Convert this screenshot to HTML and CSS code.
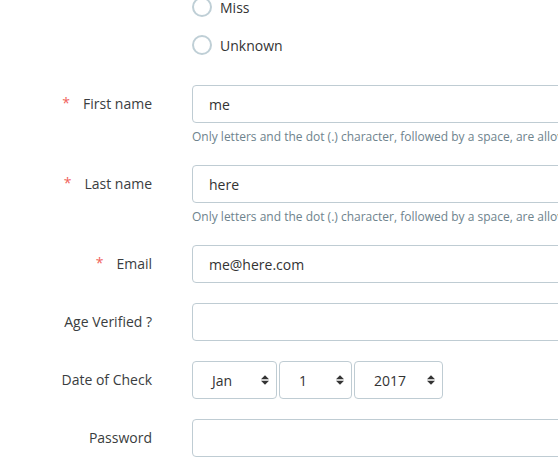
FILE: index.html
```html
<!DOCTYPE html>
<html lang="en">
<head>
<meta charset="utf-8">
<title>Form</title>
<link rel="stylesheet" href="styles.css">
</head>
<body>
<form class="form">
  <div class="radio-list">
    <label class="radio-row"><span class="radio"></span><span>Miss</span></label>
    <label class="radio-row"><span class="radio"></span><span>Unknown</span></label>
  </div>

  <div class="field">
    <div class="label"><span class="req">*</span>First name</div>
    <div class="control">
      <div class="input">me</div>
      <div class="help">Only letters and the dot (.) character, followed by a space, are allowed.</div>
    </div>
  </div>

  <div class="field">
    <div class="label"><span class="req">*</span>Last name</div>
    <div class="control">
      <div class="input">here</div>
      <div class="help">Only letters and the dot (.) character, followed by a space, are allowed.</div>
    </div>
  </div>

  <div class="field">
    <div class="label"><span class="req">*</span>Email</div>
    <div class="control">
      <div class="input">me@here.com</div>
    </div>
  </div>

  <div class="field">
    <div class="label">Age Verified ?</div>
    <div class="control">
      <div class="input"></div>
    </div>
  </div>

  <div class="field">
    <div class="label">Date of Check</div>
    <div class="control">
      <div class="selects">
        <div class="select sel-month"><span>Jan</span><svg class="caret" width="8" height="10" viewBox="0 0 8 10"><path d="M0 4.2 L4 0.2 L8 4.2 Z M0 5.8 L8 5.8 L4 9.8 Z" fill="#333"/></svg></div>
        <div class="select sel-day"><span>1</span><svg class="caret" width="8" height="10" viewBox="0 0 8 10"><path d="M0 4.2 L4 0.2 L8 4.2 Z M0 5.8 L8 5.8 L4 9.8 Z" fill="#333"/></svg></div>
        <div class="select sel-year"><span>2017</span><svg class="caret" width="8" height="10" viewBox="0 0 8 10"><path d="M0 4.2 L4 0.2 L8 4.2 Z M0 5.8 L8 5.8 L4 9.8 Z" fill="#333"/></svg></div>
      </div>
    </div>
  </div>

  <div class="field">
    <div class="label">Password</div>
    <div class="control">
      <div class="input"></div>
    </div>
  </div>
</form>
</body>
</html>
```
FILE: styles.css
```css
html, body {
  margin: 0;
  padding: 0;
  overflow: hidden;
  background: #fff;
}
body {
  font-family: "Open Sans", "DejaVu Sans", sans-serif;
  font-size: 14px;
  color: #333;
}
.form {
  display: flex;
  flex-direction: column;
  width: 558px;
  overflow: hidden;
}
.radio-list {
  margin-top: -12px;
  margin-bottom: 21px;
  padding-left: 192px;
  display: flex;
  flex-direction: column;
}
.radio-row {
  height: 38px;
  display: flex;
  align-items: center;
  gap: 8px;
  color: #333;
}
.radio {
  width: 20px;
  height: 20px;
  box-sizing: border-box;
  border: 2px solid #bfcfd6;
  border-radius: 50%;
  background: #fff;
}
.field {
  display: grid;
  grid-template-columns: 152px 420px;
  column-gap: 40px;
  margin-bottom: 20px;
}
.label {
  height: 37px;
  display: flex;
  align-items: center;
  justify-content: flex-end;
  color: #3a3d40;
  white-space: nowrap;
}
.req {
  color: #f0625c;
  margin-right: 13px;
  position: relative;
  top: -1px;
}
.control {
  display: flex;
  flex-direction: column;
}
.input {
  box-sizing: border-box;
  height: 38px;
  width: 420px;
  border: 1px solid #bfccd3;
  border-radius: 4px;
  padding: 0 16px;
  display: flex;
  align-items: center;
  color: #333;
}
.help {
  margin-top: 6px;
  line-height: 16px;
  font-size: 12px;
  color: #6e838d;
  white-space: nowrap;
}
.selects {
  display: flex;
  gap: 2px;
}
.select {
  box-sizing: border-box;
  height: 38px;
  border: 1px solid #bfccd3;
  border-radius: 4px;
  padding: 0 7px 0 19px;
  display: flex;
  align-items: center;
  justify-content: space-between;
  color: #333;
}
.sel-month { width: 85px; }
.sel-day { width: 73px; }
.sel-year { width: 89px; }
.caret { display: block; }
```
